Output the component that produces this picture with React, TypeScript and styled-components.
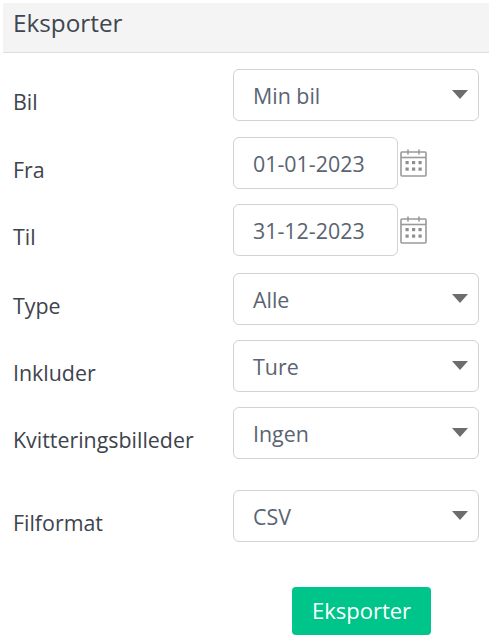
import React from "react";
import styled, { createGlobalStyle } from "styled-components";

const Global = createGlobalStyle`
  html, body { margin: 0; padding: 0; background: #fff; }
  body { font-family: "Open Sans", "Liberation Sans", sans-serif; }
`;
const Page = styled.div`
  width: 489px; height: 641px; box-sizing: border-box; padding-top: 3px; overflow: hidden;
  display: flex; flex-direction: column;
`;
const Header = styled.div`
  margin-left: 3px; height: 50px; box-sizing: border-box; padding: 4px 0 0 10px;
  background: #f4f4f4; border-bottom: 1px solid #dedede;
  font-size: 24.3px; line-height: 32px; color: #3f4650;
`;
const Form = styled.div`
  display: flex; flex-direction: column; gap: 15px; padding: 16px 10px 0 13px;
`;
const Row = styled.div<{ $gapBefore?: number }>`
  display: grid; grid-template-columns: 220px 1fr; align-items: start;
  margin-top: ${(p) => p.$gapBefore ?? 0}px;
`;
const Label = styled.div`
  font-size: 21.4px; line-height: 26px; color: #3d444d; padding-top: 20px; white-space: nowrap;
`;
const Field = styled.div`
  display: flex; align-items: center; gap: 1px;
`;
const Box = styled.div<{ $date?: boolean }>`
  width: ${(p) => (p.$date ? "165px" : "246px")}; height: 52px; box-sizing: border-box;
  border: 1.5px solid #d2d2d2; border-radius: 6px; background: #fff;
  display: flex; align-items: center; justify-content: space-between;
  padding: 0 10px 0 19px;
  font-size: 21.4px; color: #5a6472; position: relative;
`;
const Arrow = styled.span`
  width: 0; height: 0; border-left: 8px solid transparent; border-right: 8px solid transparent;
  border-top: 9px solid #6d6d6d; margin-top: -2px;
`;
const Actions = styled.div`
  display: flex; padding: 45px 0 0 292px;
`;
const Button = styled.button`
  width: 139px; height: 48px; border: 0; border-radius: 4px; background: #00c58a; color: #fff;
  font-family: inherit; font-size: 22px; padding: 0 0 3px;
`;

const Calendar = () => (
  <svg width="30" height="32" viewBox="0 0 30 32" fill="none" aria-hidden="true">
    <rect x="2" y="5" width="25" height="24" rx="1" stroke="#9a9a9a" strokeWidth="1.6" />
    <path d="M2 10.5h25" stroke="#9a9a9a" strokeWidth="1.6" />
    <path d="M9 2.5v5M20 2.5v5" stroke="#9a9a9a" strokeWidth="1.6" />
    {[8, 14.5, 21].map((x) =>
      [15.5, 22].map((y) => <rect key={`${x}-${y}`} x={x - 1.5} y={y - 1.5} width="3.2" height="3.2" fill="#8f8f8f" />)
    )}
  </svg>
);

const Select = ({ label, value, gap }: { label: string; value: string; gap?: number }) => (
  <Row $gapBefore={gap}>
    <Label>{label}</Label>
    <Field>
      <Box>
        {value}
        <Arrow />
      </Box>
    </Field>
  </Row>
);
const DateRow = ({ label, value, gap }: { label: string; value: string; gap?: number }) => (
  <Row $gapBefore={gap}>
    <Label>{label}</Label>
    <Field>
      <Box $date>{value}</Box>
      <Calendar />
    </Field>
  </Row>
);

export default function App() {
  return (
    <Page>
      <Global />
      <Header>Eksporter</Header>
      <Form>
        <Select label="Bil" value="Min bil" />
        <DateRow label="Fra" value="01-01-2023" gap={1} />
        <DateRow label="Til" value="31-12-2023" />
        <Select label="Type" value="Alle" gap={2} />
        <Select label="Inkluder" value="Ture" />
        <Select label="Kvitteringsbilleder" value="Ingen" />
        <Select label="Filformat" value="CSV" gap={16} />
      </Form>
      <Actions>
        <Button>Eksporter</Button>
      </Actions>
    </Page>
  );
}
